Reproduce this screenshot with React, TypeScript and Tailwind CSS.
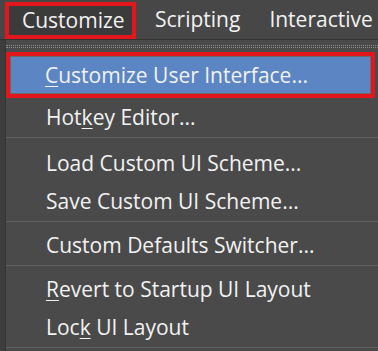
const items: { label: string; u?: number; sep?: "lg" | "sm" }[] = [
  { label: "Hotkey Editor...", u: 3, sep: "lg" },
  { label: "Load Custom UI Scheme..." },
  { label: "Save Custom UI Scheme...", sep: "sm" },
  { label: "Custom Defaults Switcher...", sep: "sm" },
  { label: "Revert to Startup UI Layout", u: 0 },
  { label: "Lock UI Layout", u: 3, sep: "lg" },
];

function Label({ text, u }: { text: string; u?: number }) {
  if (u === undefined) return <span className="whitespace-pre">{text}</span>;
  return (
    <span className="whitespace-pre">
      {text.slice(0, u)}
      <u className="underline-offset-[3px] decoration-1">{text[u]}</u>
      {text.slice(u + 1)}
    </span>
  );
}

export default function App() {
  return (
    <div
      className="w-[378px] h-[351px] overflow-hidden bg-[#4a4a4a] text-[#f2f2f2] text-[21px] leading-none"
      style={{ fontFamily: '"Open Sans", "DejaVu Sans", sans-serif' }}
    >
      {/* menu bar */}
      <div className="h-[40px] flex items-center bg-[#474747] border-b border-[#333]">
        <div className="ml-[5px] mt-[2px] h-[37px] w-[131px] border-[4px] border-[#e3151d] bg-[#3b3b3b] flex items-center pl-[13px]">
          Customize
        </div>
        <div className="ml-[19px]">Scripting</div>
        <div className="ml-[29px]">Interactive</div>
      </div>

      <div className="flex">
        <div className="w-[6px] bg-[#3d3d3d] border-r border-[#353535] shrink-0" />
        <div className="flex-1">
          {/* tear-off strip */}
          <div className="h-[12px] flex items-center">
            <div className="w-full h-[3px] border-y border-dotted border-[#8a8a8a]" />
          </div>

          {/* highlighted item */}
          <div className="h-[46px] mr-[3px] border-[4px] border-[#e3151d] p-[1px] bg-[#6a6a6a]">
            <div className="h-full bg-[#5b86c3] flex items-center pl-[34px]">
              <Label text="Customize User Interface..." u={0} />
            </div>
          </div>

          {items.map((it) => (
            <div key={it.label}>
              <div className="h-[38px] flex items-center pl-[40px]">
                <Label text={it.label} u={it.u} />
              </div>
              {it.sep === "lg" && (
                <div className="h-[8px] pt-[1px]">
                  <div className="h-px bg-[#5f5f5f]" />
                </div>
              )}
              {it.sep === "sm" && (
                <div className="h-[6px] pt-[1px]">
                  <div className="h-px bg-[#5f5f5f]" />
                </div>
              )}
            </div>
          ))}
        </div>
      </div>
    </div>
  );
}
